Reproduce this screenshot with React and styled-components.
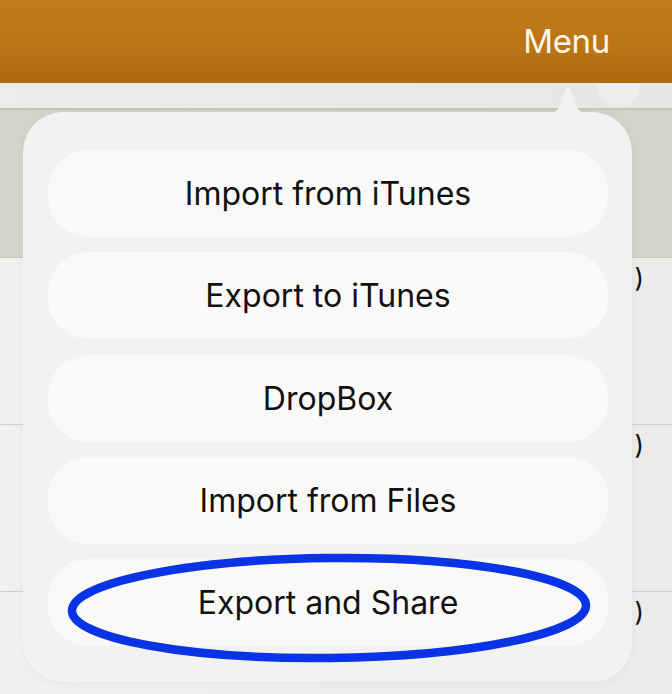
import React from "react";
import styled, { createGlobalStyle } from "styled-components";

const GlobalStyle = createGlobalStyle`
  html, body {
    margin: 0;
    padding: 0;
    background: #efefed;
  }
  body {
    font-family: Inter, "Liberation Sans", sans-serif;
    overflow: hidden;
  }
`;

const menuItems = [
  "Import from iTunes",
  "Export to iTunes",
  "DropBox",
  "Import from Files",
  "Export and Share",
];

const App = () => {
  return (
    <>
      <GlobalStyle />
      <Screen>
        <NavBar>
          <NavTitle>Menu</NavTitle>
        </NavBar>

        <SearchStrip>
          <SearchBlob />
        </SearchStrip>
        <SectionHeader />
        <ListRow><RowTail>)</RowTail></ListRow>
        <ListRow><RowTail>)</RowTail></ListRow>
        <ListRow><RowTail>)</RowTail></ListRow>

        {/* popover menu */}
        <PopoverArrow />
        <Popover>
          {menuItems.map((label, index) => (
            <MenuButton key={index}>
              {label}
              {index === menuItems.length - 1 && (
                <Circled viewBox="0 0 560 110" preserveAspectRatio="none">
                  <ellipse
                    cx="281"
                    cy="54"
                    rx="257"
                    ry="50"
                    fill="none"
                    stroke="#0a33e6"
                    strokeWidth="8.5"
                    transform="rotate(-0.6 281 54)"
                  />
                </Circled>
              )}
            </MenuButton>
          ))}
        </Popover>
      </Screen>
    </>
  );
};

export default App;

const Screen = styled.div`
  position: relative;
  width: 672px;
  height: 694px;
  display: flex;
  flex-direction: column;
  overflow: hidden;
`;

// top orange bar
const NavBar = styled.div`
  height: 83px;
  flex-shrink: 0;
  background: linear-gradient(to bottom, #c27b1b 0%, #bb7516 55%, #ad690e 100%);
  display: flex;
  align-items: center;
  justify-content: flex-end;
  padding-right: 62px;
`;
const NavTitle = styled.div`
  color: #fbf5ea;
  font-size: 33px;
  font-weight: 400;
  letter-spacing: -0.3px;
  margin-top: -2px;
`;

const SearchStrip = styled.div`
  position: relative;
  height: 25px;
  flex-shrink: 0;
  background: linear-gradient(to right, #ececea, #e6e6e4);
  border-bottom: 2px solid #c4c4bc;
`;
const SearchBlob = styled.div`
  position: absolute;
  right: 32px;
  top: 0;
  width: 44px;
  height: 24px;
  border-radius: 0 0 24px 24px;
  background: #ededeb;
`;

const SectionHeader = styled.div`
  height: 147px;
  flex-shrink: 0;
  background: #d3d3cb;
  border-bottom: 1px solid #c9c9c4;
`;

const ListRow = styled.div`
  height: 166px;
  flex-shrink: 0;
  background: linear-gradient(to right, #f0f0ee, #ebebe9);
  border-bottom: 1px solid #cfcfcb;
  display: flex;
  justify-content: flex-end;
  align-items: flex-start;
`;
const RowTail = styled.span`
  font-size: 26px;
  color: #111;
  margin-top: 4px;
  margin-right: 28px;
`;

const Popover = styled.div`
  position: absolute;
  left: 23px;
  top: 112px;
  width: 609px;
  height: 570px;
  box-sizing: border-box;
  padding: 38px 24px 0 25px;
  border-radius: 40px;
  background: #f2f2f0;
  box-shadow: 0 2px 10px rgba(0, 0, 0, 0.04);
  display: flex;
  flex-direction: column;
  gap: 15.3px;
`;

const PopoverArrow = styled.div`
  position: absolute;
  left: 539px;
  top: 85px;
  width: 58px;
  height: 31px;
  background: #f2f2f0;
  clip-path: path("M0 31 C13 31 17 27 22 20 L26 5 C27.5 1 30.5 1 32 5 L36 20 C41 27 45 31 58 31 Z");
  z-index: 1;
`;

const MenuButton = styled.div`
  position: relative;
  height: 87px;
  flex-shrink: 0;
  border-radius: 40px;
  background: #f9f9f8;
  display: flex;
  align-items: center;
  justify-content: center;
  font-size: 32px;
  color: #111;
`;

// hand-drawn ring around the last item
const Circled = styled.svg`
  position: absolute;
  left: 0;
  top: -5px;
  width: 560px;
  height: 110px;
  overflow: visible;
  pointer-events: none;
`;
